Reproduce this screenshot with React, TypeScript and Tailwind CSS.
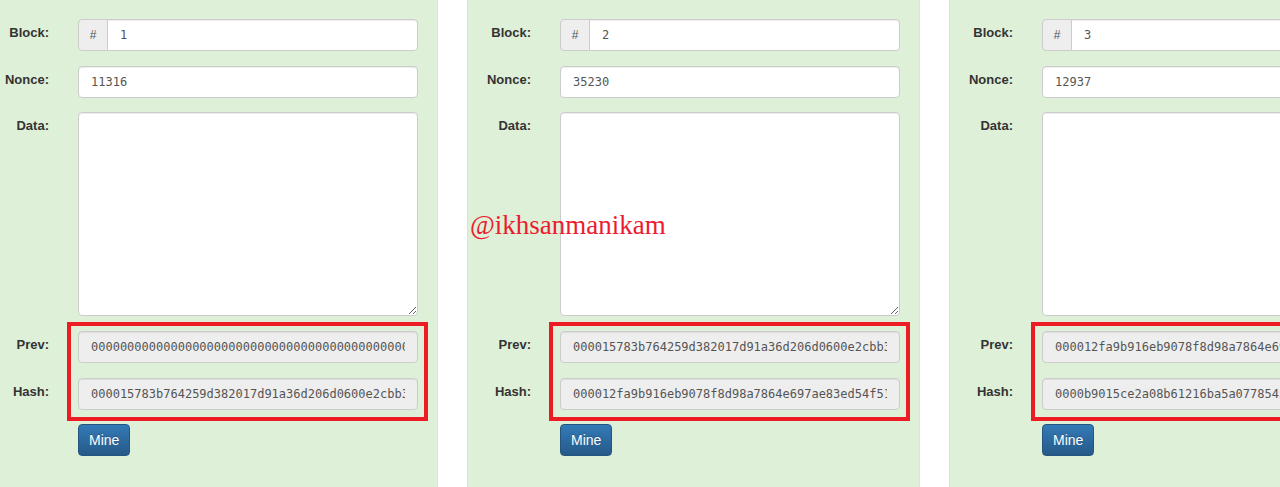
const blocks = [
  { num: '1', nonce: '11316', prev: '0000000000000000000000000000000000000000000000000000000000000000', hash: '000015783b764259d382017d91a36d206d0600e2cbb3567748f46a33fe9297cf' },
  { num: '2', nonce: '35230', prev: '000015783b764259d382017d91a36d206d0600e2cbb3567748f46a33fe9297cf', hash: '000012fa9b916eb9078f8d98a7864e697ae83ed54f5146bd84452cdafd043c19' },
  { num: '3', nonce: '12937', prev: '000012fa9b916eb9078f8d98a7864e697ae83ed54f5146bd84452cdafd043c19', hash: '0000b9015ce2a08b61216ba5a0778545bf4ddd7ceb7bbf85dd4e55f2b8e4e1b9' },
]

const mono = "font-['DejaVu_Sans_Mono','Liberation_Mono',monospace] text-[12px] text-[#555]"
const input = `h-[32px] rounded-[4px] border border-[#ccc] px-[12px] shadow-[inset_0_1px_1px_rgba(0,0,0,0.075)] outline-none ${mono}`

function Label({ children }: { children: string }) {
  return (
    <div className="w-[63px] shrink-0 pt-[6px] text-right text-[13px] leading-[16px] font-bold text-[#333]">
      {children}
    </div>
  )
}

function Block({ num, nonce, prev, hash }: (typeof blocks)[number]) {
  return (
    <div className="w-[453px] shrink-0 -mt-[2px] h-[520px] rounded-[4px] border border-[#d6e9c6] bg-[#dff0d8] pt-[20px]">
      <div className="flex">
        <Label>Block:</Label>
        <div className="ml-[29px] flex w-[340px]">
          <span className="flex h-[32px] w-[30px] items-center justify-center rounded-l-[4px] border border-[#ccc] bg-[#eee] text-[12px] text-[#555]">#</span>
          <input readOnly value={num} className={`${input} -ml-px flex-1 rounded-l-none bg-white`} />
        </div>
      </div>
      <div className="mt-[15px] flex">
        <Label>Nonce:</Label>
        <input readOnly value={nonce} className={`${input} ml-[29px] w-[340px] bg-white`} />
      </div>
      <div className="mt-[14px] flex">
        <Label>Data:</Label>
        <textarea readOnly className={`${input} ml-[29px] h-[204px] w-[340px] bg-white`} />
      </div>
      <div className="relative mt-[15px]">
        <div className="flex">
          <Label>Prev:</Label>
          <input readOnly value={prev} className={`${input} ml-[29px] w-[340px] bg-[#eee]`} />
        </div>
        <div className="mt-[15px] flex">
          <Label>Hash:</Label>
          <input readOnly value={hash} className={`${input} ml-[29px] w-[340px] bg-[#eee]`} />
        </div>
        <div className="pointer-events-none absolute -top-[9px] -bottom-[11px] left-[81px] w-[361px] border-[4px] border-[#ed1c24]" />
      </div>
      <div className="mt-[14px] pl-[92px]">
        <button className="h-[32px] rounded-[4px] border border-[#245580] bg-gradient-to-b from-[#337ab7] to-[#265a88] px-[10px] text-[14px] text-white [text-shadow:0_-1px_0_rgba(0,0,0,0.2)]">
          Mine
        </button>
      </div>
    </div>
  )
}

export default function App() {
  return (
    <div className="relative h-[487px] w-[1280px] overflow-hidden bg-white font-['Liberation_Sans',Arial,sans-serif]">
      <div className="-ml-[15px] flex gap-[29px]">
        {blocks.map((b) => (
          <Block key={b.num} {...b} />
        ))}
      </div>
      <div className="absolute left-[470px] top-[207px] font-['Liberation_Serif','Times_New_Roman',serif] text-[27px] leading-[36px] text-[#ec1c2e]">
        @ikhsanmanikam
      </div>
    </div>
  )
}
